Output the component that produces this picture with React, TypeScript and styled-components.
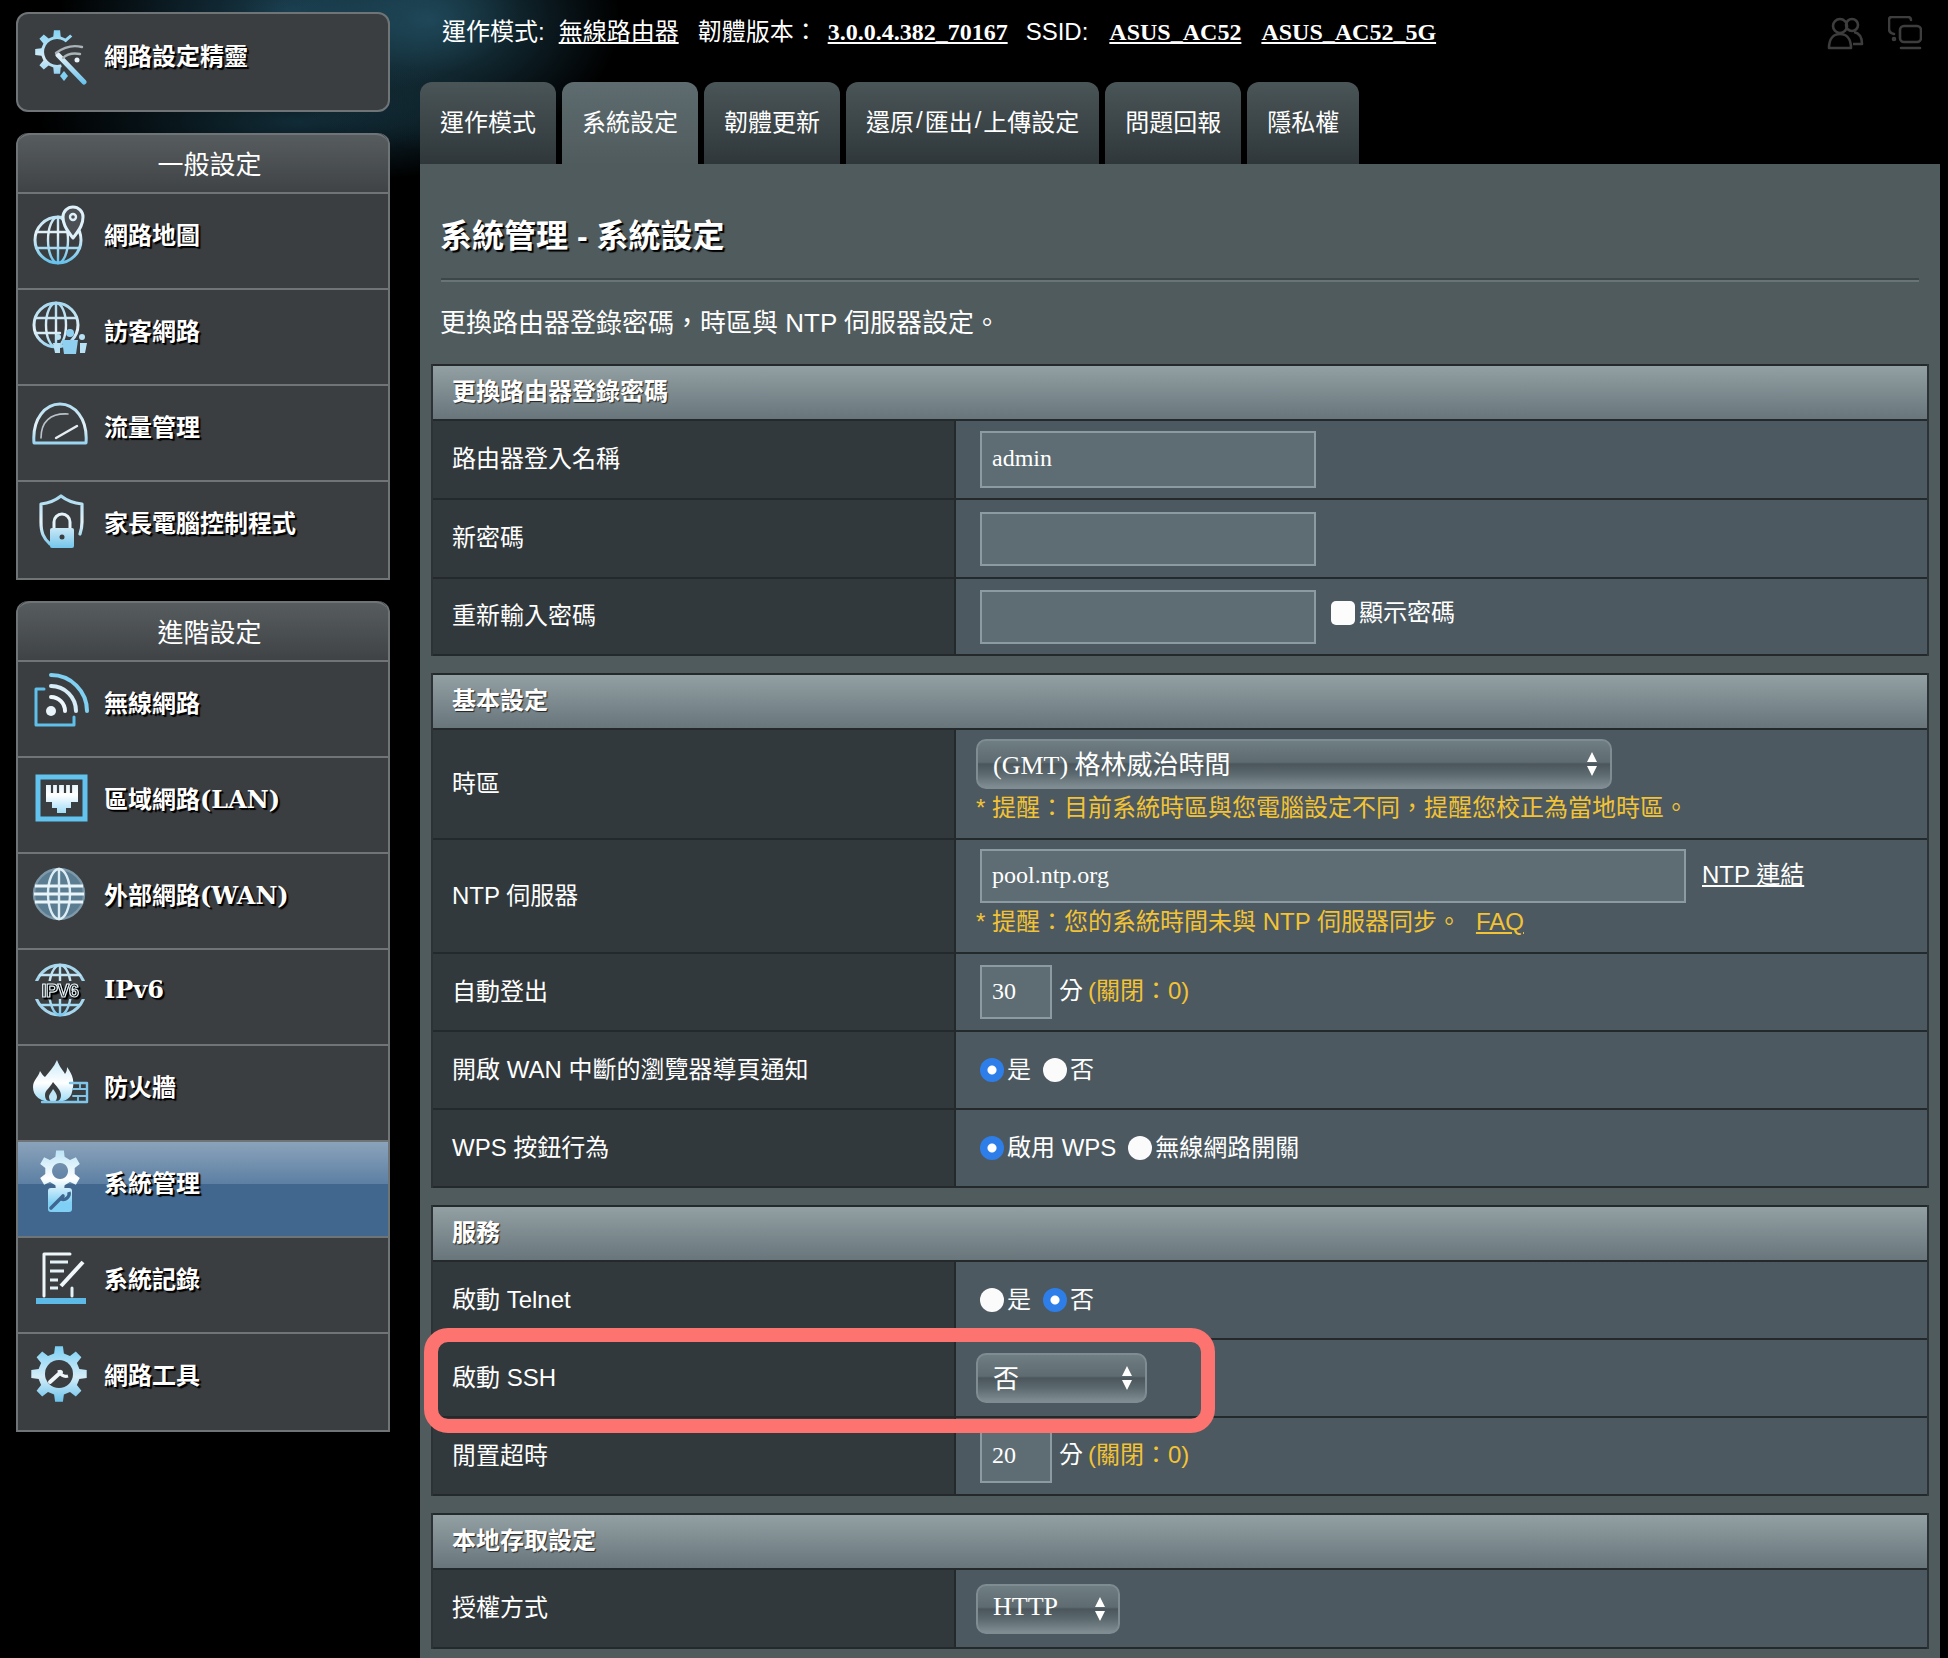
import React from "react";
import styled, { createGlobalStyle } from "styled-components";

const sans = `"Liberation Sans", "Noto Sans CJK TC", sans-serif`;
const serif = `"Liberation Serif", "Noto Sans CJK TC", serif`;

// full-width punctuation used all over the router's copy
const COLON = "\uFF1A";
const COMMA = "\uFF0C";

const GlobalStyle = createGlobalStyle`
  html, body {
    margin: 0;
    padding: 0;
    background: #000;
    overflow: hidden;
  }
  * {
    box-sizing: border-box;
  }
`;

const Page = styled.div`
  width: 1948px;
  height: 1658px;
  display: grid;
  grid-template-columns: 420px 1fr;
  color: #fff;
  font-family: ${sans};
  background:
    radial-gradient(ellipse 190px 130px at 430px 20px, rgba(38, 88, 108, 0.75), transparent 100%),
    radial-gradient(ellipse 230px 90px at 290px 10px, rgba(30, 72, 92, 0.8), transparent 100%),
    radial-gradient(ellipse 260px 60px at 300px 122px, rgba(24, 62, 78, 0.7), transparent 100%),
    #000;
`;

/* ---------- sidebar ---------- */

const Sidebar = styled.aside`
  padding: 12px 30px 0 16px;
  display: flex;
  flex-direction: column;
  gap: 21px;
`;

const NavBox = styled.nav`
  padding-bottom: 2px;
  background: #3b3e41;
  border: 2px solid #6f7477;
  border-top: 0;
  border-radius: 12px 12px 0 0;
  overflow: hidden;
`;

const NavHeading = styled.div`
  height: 59px;
  display: flex;
  align-items: center;
  justify-content: center;
  padding: 0 0 3px 13px;
  font-size: 26px;
  background: linear-gradient(#575c5f, #3f4346);
  border-top: 2px solid #6f7477;
  border-radius: 12px 12px 0 0;
`;

const NavItem = styled.a<{ $active?: boolean }>`
  height: 96px;
  display: flex;
  align-items: center;
  gap: 14px;
  padding: 0 0 15px 12px;
  border-top: 2px solid #6f7477;
  font-family: "DejaVu Serif", "Noto Sans CJK TC", serif;
  font-size: 24px;
  font-weight: 700;
  text-shadow: 2px 2px 1px #000, 1px 1px 0 #000;
  background: ${(p) =>
    p.$active
      ? "linear-gradient(#8ba3bb 0, #5c7fa3 45%, #41678f 45%, #41678f 100%)"
      : "transparent"};
`;

const WizardLink = styled(NavItem)`
  height: 100px;
  background: #3b3e41;
  border: 2px solid #6f7477;
  border-radius: 12px;
`;

const IconSvg = styled.svg`
  width: 60px;
  height: 60px;
  flex: none;
  overflow: visible;
  filter: blur(0.5px);
`;

const PaintDefs = styled.svg`
  display: block;
  width: 0;
  height: 0;
`;

const gearPath = (cx: number, cy: number, outer: number, inner: number, teeth: number) => {
  const pts: string[] = [];
  const step = (Math.PI * 2) / teeth;
  for (let i = 0; i < teeth; i++) {
    const a = i * step - Math.PI / 2;
    [
      [-0.3, inner],
      [-0.18, outer],
      [0.18, outer],
      [0.3, inner],
    ].forEach(([f, r]) => {
      const x = cx + Math.cos(a + f * step) * r;
      const y = cy + Math.sin(a + f * step) * r;
      pts.push(`${x.toFixed(1)} ${y.toFixed(1)}`);
    });
  }
  return `M${pts.join("L")}Z`;
};

const Glyph = ({ children }: { children: React.ReactNode }) => (
  <IconSvg viewBox="0 0 60 60">
    <g fill="none" stroke="url(#sky)" strokeWidth="2.4" strokeLinecap="round" strokeLinejoin="round">
      {children}
    </g>
  </IconSvg>
);

const WizardIcon = () => (
  <Glyph>
    <clipPath id="wizardCut">
      <path d="M0 0H44V10L27 25L34 50L28 60H0Z" />
    </clipPath>
    <path
      clipPath="url(#wizardCut)"
      fillRule="evenodd"
      fill="url(#skyBlue)"
      stroke="none"
      d={`${gearPath(27, 27, 22, 16, 8)}M27 14a13 13 0 1 0 .1 0Z`}
    />
    <path d="M28 30L54 57" stroke="url(#sky)" strokeWidth="5" />
    <path d="M26 28C34 22 44 20 52 22" stroke="#aab4b8" />
    <path d="M33 33C38 28 44 28 50 29" stroke="#aab4b8" />
    <circle cx="47" cy="35" r="2.5" fill="#e8f4fa" stroke="none" />
    <path d="M34 46L38 51L34 56L30 51Z" fill="#7fd0f2" stroke="none" />
  </Glyph>
);

const MapIcon = () => (
  <Glyph>
    <circle cx="28" cy="36" r="23" strokeWidth="3" />
    <ellipse cx="28" cy="36" rx="10" ry="23" />
    <path d="M6 28H50M6 44H50M28 13V59" />
    <path d="M43 34C35 24 33 19 33 13a10 10 0 0 1 20 0C53 19 51 24 43 34Z" fill="#4c5054" stroke="#dff1fa" strokeWidth="3" />
    <circle cx="43" cy="13" r="3" stroke="#dff1fa" />
  </Glyph>
);

const GuestIcon = () => (
  <Glyph>
    <circle cx="26" cy="25" r="22" strokeWidth="3" />
    <ellipse cx="26" cy="25" rx="10" ry="22" />
    <path d="M5 18H47M5 33H30M26 3V46" />
    <circle cx="40" cy="33" r="4" fill="#8fd0f0" stroke="none" />
    <path d="M32 40H48L46 54H34Z" fill="#8fd0f0" stroke="none" />
    <circle cx="28" cy="37" r="3" fill="#b8e2f4" stroke="none" />
    <path d="M23 43H30V53H25Z" fill="#b8e2f4" stroke="none" />
    <circle cx="52" cy="37" r="3" fill="#b8e2f4" stroke="none" />
    <path d="M50 43H57L55 53H50Z" fill="#b8e2f4" stroke="none" />
  </Glyph>
);

const GaugeIcon = () => (
  <Glyph>
    <path d="M4 47C2 22 16 8 30 8S58 22 56 47Z" strokeWidth="3" />
    <path d="M11 42C11 26 20 17 38 18" stroke="#b9c4c9" strokeWidth="1.6" />
    <path d="M26 42L47 30" stroke="#e5eef2" />
  </Glyph>
);

const ShieldIcon = () => (
  <Glyph>
    <path d="M20 52C13 46 11 40 11 30V12C20 11 26 8 31 4C36 8 42 11 52 12V30C52 35 51 39 50 42" strokeWidth="3.2" />
    <path d="M24 36v-6a8 8 0 0 1 16 0v6" stroke="#e4f3fa" strokeWidth="3" />
    <rect x="20" y="36" width="24" height="20" rx="2" fill="url(#sky)" stroke="none" />
    <circle cx="32" cy="45" r="2.5" fill="#3b3e41" stroke="none" />
  </Glyph>
);

const WirelessIcon = () => (
  <Glyph>
    <path d="M14 17H6V53H44V45" stroke="#5fc0ec" strokeWidth="3" />
    <circle cx="21" cy="39" r="5" fill="#e8f4fa" stroke="none" />
    <path d="M21 25A14 14 0 0 1 35 39" stroke="#eef8fc" strokeWidth="4" />
    <path d="M21 14A25 25 0 0 1 46 39" stroke="#d6edf8" strokeWidth="4" />
    <path d="M21 3A36 36 0 0 1 57 39" stroke="#7fd0f2" strokeWidth="4" />
  </Glyph>
);

const LanIcon = () => (
  <Glyph>
    <rect x="8" y="9" width="47" height="42" stroke="#63c3ef" strokeWidth="5" strokeLinejoin="miter" />
    <path
      d="M16 17H48V34H41V40H36V45H27V40H22V34H16Z"
      fill="url(#skyWhite)"
      stroke="none"
    />
    <path d="M22 16V25M28 16V25M35 16V25M41 16V25" stroke="#3b3e41" strokeWidth="2.2" strokeLinecap="butt" />
  </Glyph>
);

const GlobeIcon = () => (
  <Glyph>
    <circle cx="29" cy="30" r="25" fill="#5b7d92" stroke="#7d99aa" />
    <ellipse cx="29" cy="30" rx="11" ry="25" stroke="#dcedf5" />
    <path d="M5 22H53M4 30H54M5 38H53" stroke="#eaf5fa" strokeWidth="3" strokeLinecap="butt" />
    <path d="M29 5V55" stroke="#dcedf5" />
  </Glyph>
);

const Ipv6Label = styled.text`
  font-family: ${sans};
  font-size: 18px;
  font-weight: 700;
  letter-spacing: -0.5px;
  fill: #3b3e41;
  stroke: #e4f1f7;
  stroke-width: 1.2px;
`;

const Ipv6Icon = () => (
  <Glyph>
    <circle cx="30" cy="30" r="25" stroke="#a6d6ee" strokeWidth="3" />
    <ellipse cx="30" cy="30" rx="11" ry="25" />
    <path d="M10 15H50M10 45H50M30 5V22M30 38V55" />
    <rect x="3" y="21" width="54" height="18" fill="#3b3e41" stroke="none" />
    <Ipv6Label x="30" y="37" textAnchor="middle">IPV6</Ipv6Label>
  </Glyph>
);

const FirewallIcon = () => (
  <Glyph>
    <path
      d="M27 4C30 12 33 14 35 18C37 15 37 13 37 11C43 19 45 26 42 36C41 42 36 46 24 46C10 46 3 40 3 31C3 24 8 22 10 15C12 18 13 20 15 21C19 16 24 11 27 4Z"
      fill="url(#skyWhite)"
      stroke="none"
    />
    <path d="M23 26C26 30 31 34 31 39C31 44 28 46 23 46C18 46 15 44 15 39C15 34 20 32 23 26Z" fill="#3b3e41" stroke="none" />
    <path d="M23 33C25 36 27 38 27 41C27 44 25 46 23 46S19 44 19 41C19 38 22 36 23 33Z" fill="#bfe6f6" stroke="none" />
    <path d="M40 27H57V46H12" stroke="#7fc6ea" />
    <path d="M43 33H57M43 40H57M50 27V33M48 40V46" stroke="#7fc6ea" strokeWidth="1.8" />
  </Glyph>
);

const SystemIcon = () => (
  <Glyph>
    <path
      fillRule="evenodd"
      fill="url(#skyWhite)"
      stroke="none"
      d={`${gearPath(30, 19, 21, 15, 6)}M30 11a8 8 0 1 0 .1 0Z`}
    />
    <rect x="18" y="36" width="24" height="24" rx="3" fill="url(#skyWhite)" stroke="none" />
    <path d="M21 56L33 44" stroke="#3f6690" strokeWidth="3.6" />
    <path d="M31 47a6 6 0 0 0 8 -7" stroke="#3f6690" strokeWidth="3.4" strokeLinecap="butt" />
  </Glyph>
);

const LogIcon = () => (
  <Glyph>
    <path d="M14 48V6H40" stroke="#eef6fa" strokeWidth="3" />
    <path d="M42 40V48" stroke="#e4f1f7" strokeWidth="3" />
    <path d="M20 14H38M20 23H34M20 32H28M20 40H28" stroke="#e4f1f7" strokeWidth="3" strokeLinecap="butt" />
    <path d="M31 38L53 14" stroke="#f1f8fb" strokeWidth="4" strokeLinecap="butt" />
    <path d="M6 56V50H56V56Z" fill="#5db9e6" stroke="none" />
  </Glyph>
);

const ToolsIcon = () => (
  <Glyph>
    <path fill="url(#skyBlue)" stroke="none" d={gearPath(29, 30, 28, 21, 8)} />
    <circle cx="29" cy="30" r="14" fill="#3b3e41" stroke="none" />
    <path d="M20 38L31 28" stroke="#eef6fa" strokeWidth="4" />
    <path d="M29 26a7 7 0 0 0 9 6" stroke="#eef6fa" strokeWidth="3.2" strokeLinecap="butt" />
  </Glyph>
);

const generalNav = [
  { label: "網路地圖", icon: <MapIcon /> },
  { label: "訪客網路", icon: <GuestIcon /> },
  { label: "流量管理", icon: <GaugeIcon /> },
  { label: "家長電腦控制程式", icon: <ShieldIcon /> },
];

const advancedNav = [
  { label: "無線網路", icon: <WirelessIcon /> },
  { label: "區域網路(LAN)", icon: <LanIcon /> },
  { label: "外部網路(WAN)", icon: <GlobeIcon /> },
  { label: "IPv6", icon: <Ipv6Icon /> },
  { label: "防火牆", icon: <FirewallIcon /> },
  { label: "系統管理", icon: <SystemIcon />, active: true },
  { label: "系統記錄", icon: <LogIcon /> },
  { label: "網路工具", icon: <ToolsIcon /> },
];

/* ---------- top bar and tabs ---------- */

const Main = styled.main`
  margin-right: 8px;
  display: flex;
  flex-direction: column;
  min-width: 0;
`;

const TopBar = styled.header`
  height: 82px;
  padding: 16px 18px 0 22px;
  display: flex;
  justify-content: space-between;
  align-items: flex-start;
`;

const StatusLine = styled.div`
  display: flex;
  align-items: center;
  font-size: 24px;
  line-height: 32px;
  white-space: nowrap;
`;

const StatusLabel = styled.span<{ $gap: number }>`
  margin-right: ${(p) => p.$gap}px;
`;

const StatusLink = styled.a<{ $gap: number; $plain?: boolean }>`
  margin-right: ${(p) => p.$gap}px;
  font-family: ${serif};
  font-weight: ${(p) => (p.$plain ? 400 : 700)};
  text-decoration: underline;
`;

const StatusIcons = styled.div`
  display: flex;
  gap: 24px;
  color: #3d3d3d;
`;

const Tabs = styled.div`
  height: 82px;
  display: flex;
  gap: 6px;
`;

const Tab = styled.div<{ $active?: boolean }>`
  padding: 0 20px 6px;
  display: flex;
  align-items: center;
  border-radius: 12px 12px 0 0;
  font-size: 24px;
  white-space: nowrap;
  background: ${(p) =>
    p.$active
      ? "linear-gradient(#5e6c6f, #505b5d)"
      : "linear-gradient(#4a5558, #2f373a)"};
`;

const TabSlash = styled.span`
  margin: 0 2px;
`;

/* ---------- panel ---------- */

const Panel = styled.section`
  flex: 1;
  padding: 50px 11px 10px;
  background: #505b5d;
`;

const Title = styled.h1`
  margin: 0 10px 0 9px;
  font-size: 32px;
  line-height: 44px;
  font-weight: 700;
  text-shadow: 2px 2px 1px #000;
`;

const TitleRule = styled.div`
  margin: 20px 10px 0;
  height: 4px;
  border-top: 2px solid #3d4648;
  border-bottom: 2px solid #687578;
`;

const Description = styled.p`
  margin: 23px 10px 23px 9px;
  font-size: 26px;
  line-height: 36px;
`;

const Section = styled.div`
  margin-bottom: 17px;
  border-left: 2px solid #2c3235;
  border-right: 2px solid #2c3235;
`;

const SectionHead = styled.div`
  height: 57px;
  padding: 0 0 6px 19px;
  display: flex;
  align-items: center;
  border-top: 2px solid #24292b;
  border-bottom: 2px solid #24292b;
  font-size: 24px;
  font-weight: 700;
  text-shadow: 1px 1px 1px #222;
  background: linear-gradient(#929fa3, #68767b);
`;

const Row = styled.div<{ $height: number }>`
  position: relative;
  height: ${(p) => p.$height}px;
  display: grid;
  grid-template-columns: 523px 1fr;
  border-bottom: 2px solid #24292b;
`;

const RowLabel = styled.div`
  padding: 0 0 6px 19px;
  display: flex;
  align-items: center;
  font-size: 24px;
  background: #32393c;
  border-right: 2px solid #24292b;
`;

const RowValue = styled.div<{ $stacked?: boolean }>`
  padding: ${(p) => (p.$stacked ? "9px 0 0 21px" : "0 0 0 21px")};
  display: flex;
  flex-direction: ${(p) => (p.$stacked ? "column" : "row")};
  align-items: ${(p) => (p.$stacked ? "flex-start" : "center")};
  font-size: 24px;
  background: #4c5960;
`;

const InputLine = styled.div`
  display: flex;
  align-items: center;
  gap: 16px;
`;

const TextInput = styled.input<{ $width: number; $height: number }>`
  width: ${(p) => p.$width}px;
  height: ${(p) => p.$height}px;
  margin-left: 3px;
  padding: 0 0 2px 10px;
  border: 2px solid #8b9ba1;
  border-radius: 0;
  outline: none;
  background: #5e6d74;
  color: #fff;
  font-family: ${serif};
  font-size: 24px;
`;

const Check = styled.span`
  width: 24px;
  height: 24px;
  margin: 0 4px 8px 15px;
  flex: none;
  border-radius: 5px;
  background: #fcfcfc;
`;

const CheckLabel = styled.span`
  padding-bottom: 12px;
`;

const SelectBox = styled.div<{ $width: number; $height: number }>`
  position: relative;
  width: ${(p) => p.$width}px;
  height: ${(p) => p.$height}px;
  margin-left: -1px;
  padding: 0 0 4px 15px;
  display: flex;
  align-items: center;
  border: 2px solid #7f8c91;
  border-radius: 10px;
  font-family: ${serif};
  font-size: 26px;
  background: linear-gradient(#6f7e83 0, #5e6b70 46%, #4a565b 50%, #5c696e 72%, #7f8d92 100%);
`;

const SelectArrows = styled.svg`
  position: absolute;
  right: 12px;
  top: 50%;
  margin-top: -13px;
  width: 12px;
  height: 26px;
`;

const Hint = styled.div`
  margin-top: 4px;
  margin-left: -1px;
  line-height: 30px;
  color: #f3c335;
  white-space: nowrap;
`;

const LightLink = styled.a`
  padding-bottom: 8px;
  color: #fff;
  text-decoration: underline;
`;

const HintLink = styled.a`
  margin-left: 15px;
  color: #f3c335;
  text-decoration: underline;
`;

const Unit = styled.span`
  margin-left: 7px;
  padding-bottom: 7px;
`;

const Off = styled.span`
  margin-left: 5px;
  padding-bottom: 7px;
  color: #f3c335;
`;

const RadioGroup = styled.div`
  margin-left: 3px;
  display: flex;
  align-items: center;
`;

const RadioDot = styled.span<{ $on?: boolean }>`
  width: 24px;
  height: 24px;
  margin-right: 3px;
  flex: none;
  border-radius: 50%;
  background: ${(p) =>
    p.$on ? "radial-gradient(circle, #fff 0 4px, #2d7ee8 5px)" : "#fbfbfb"};
`;

const RadioText = styled.span`
  margin-right: 12px;
  padding-bottom: 5px;
`;

const Highlight = styled.div`
  position: absolute;
  z-index: 1;
  left: -9px;
  top: -12px;
  width: 791px;
  height: 105px;
  border: 14px solid #fc7370;
  border-radius: 24px;
  pointer-events: none;
`;

const Select = ({ value, width, height }: { value: string; width: number; height: number }) => (
  <SelectBox $width={width} $height={height}>
    {value}
    <SelectArrows viewBox="0 0 12 26">
      <path d="M6 1L11 11H1Z M1 15H11L6 25Z" fill="#fff" />
    </SelectArrows>
  </SelectBox>
);

const Radios = ({ options, selected }: { options: string[]; selected: number }) => (
  <RadioGroup>
    {options.map((o, i) => (
      <React.Fragment key={o}>
        <RadioDot $on={i === selected} />
        <RadioText>{o}</RadioText>
      </React.Fragment>
    ))}
  </RadioGroup>
);

const App = () => {
  return (
    <>
      <GlobalStyle />
      <PaintDefs aria-hidden="true">
        <defs>
          <linearGradient id="sky" gradientUnits="userSpaceOnUse" x1="0" y1="0" x2="0" y2="60">
            <stop offset="0" stopColor="#9fd6f0" />
            <stop offset="0.5" stopColor="#e4f2f8" />
            <stop offset="1" stopColor="#62bfeb" />
          </linearGradient>
          <linearGradient id="skyBlue" gradientUnits="userSpaceOnUse" x1="0" y1="0" x2="0" y2="60">
            <stop offset="0" stopColor="#74cdf3" />
            <stop offset="0.55" stopColor="#d5edf8" />
            <stop offset="1" stopColor="#62bfeb" />
          </linearGradient>
          <linearGradient id="skyWhite" gradientUnits="userSpaceOnUse" x1="0" y1="0" x2="0" y2="60">
            <stop offset="0" stopColor="#bfe6f7" />
            <stop offset="0.45" stopColor="#ffffff" />
            <stop offset="0.85" stopColor="#7fd0f4" />
          </linearGradient>
        </defs>
      </PaintDefs>

      <Page>
        <Sidebar>
          <WizardLink>
            <WizardIcon />
            網路設定精靈
          </WizardLink>
          <NavBox>
            <NavHeading>一般設定</NavHeading>
            {generalNav.map((n) => (
              <NavItem key={n.label}>
                {n.icon}
                {n.label}
              </NavItem>
            ))}
          </NavBox>
          <NavBox>
            <NavHeading>進階設定</NavHeading>
            {advancedNav.map((n) => (
              <NavItem key={n.label} $active={n.active}>
                {n.icon}
                {n.label}
              </NavItem>
            ))}
          </NavBox>
        </Sidebar>

        <Main>
          <TopBar>
            <StatusLine>
              <StatusLabel $gap={14}>運作模式:</StatusLabel>
              <StatusLink $gap={19} $plain>無線路由器</StatusLink>
              <StatusLabel $gap={10}>韌體版本{COLON}</StatusLabel>
              <StatusLink $gap={18}>3.0.0.4.382_70167</StatusLink>
              <StatusLabel $gap={21}>SSID:</StatusLabel>
              <StatusLink $gap={20}>ASUS_AC52</StatusLink>
              <StatusLink $gap={0}>ASUS_AC52_5G</StatusLink>
            </StatusLine>
            <StatusIcons>
              <svg width="37" height="34" viewBox="0 0 37 34" fill="none" stroke="currentColor" strokeWidth="2.6" strokeLinejoin="round">
                <circle cx="13" cy="10" r="7" />
                <circle cx="25" cy="9" r="6" />
                <path d="M2 32C2 22 7 18 13 18S24 22 24 32Z" />
                <path d="M27 16C32 17 35 21 35 28H26" />
              </svg>
              <svg width="34" height="34" viewBox="0 0 34 34" fill="none" stroke="currentColor" strokeWidth="2.6" strokeLinecap="round">
                <path d="M6 18C2 17 1 15 1 13V4C1 2 2 1 4 1H20C22 1 23 2 23 4" />
                <rect x="12" y="10" width="21" height="16" rx="4" />
                <path d="M13 32H32" />
                <circle cx="6" cy="23" r="1" />
              </svg>
            </StatusIcons>
          </TopBar>

          <Tabs>
            <Tab>運作模式</Tab>
            <Tab $active>系統設定</Tab>
            <Tab>韌體更新</Tab>
            <Tab>
              還原<TabSlash>/</TabSlash>匯出<TabSlash>/</TabSlash>上傳設定
            </Tab>
            <Tab>問題回報</Tab>
            <Tab>隱私權</Tab>
          </Tabs>

          <Panel>
            <Title>系統管理 - 系統設定</Title>
            <TitleRule />
            <Description>更換路由器登錄密碼{COMMA}時區與 NTP 伺服器設定。</Description>

            <Section>
              <SectionHead>更換路由器登錄密碼</SectionHead>
              <Row $height={79}>
                <RowLabel>路由器登入名稱</RowLabel>
                <RowValue>
                  <TextInput $width={336} $height={57} defaultValue="admin" />
                </RowValue>
              </Row>
              <Row $height={79}>
                <RowLabel>新密碼</RowLabel>
                <RowValue>
                  <TextInput $width={336} $height={54} />
                </RowValue>
              </Row>
              <Row $height={77}>
                <RowLabel>重新輸入密碼</RowLabel>
                <RowValue>
                  <TextInput $width={336} $height={54} />
                  <Check />
                  <CheckLabel>顯示密碼</CheckLabel>
                </RowValue>
              </Row>
            </Section>

            <Section>
              <SectionHead>基本設定</SectionHead>
              <Row $height={110}>
                <RowLabel>時區</RowLabel>
                <RowValue $stacked>
                  <Select value="(GMT) 格林威治時間" width={636} height={50} />
                  <Hint>* 提醒{COLON}目前系統時區與您電腦設定不同{COMMA}提醒您校正為當地時區。</Hint>
                </RowValue>
              </Row>
              <Row $height={114}>
                <RowLabel>NTP 伺服器</RowLabel>
                <RowValue $stacked>
                  <InputLine>
                    <TextInput $width={706} $height={54} defaultValue="pool.ntp.org" />
                    <LightLink>NTP 連結</LightLink>
                  </InputLine>
                  <Hint>
                    * 提醒{COLON}您的系統時間未與 NTP 伺服器同步。
                    <HintLink>FAQ</HintLink>
                  </Hint>
                </RowValue>
              </Row>
              <Row $height={78}>
                <RowLabel>自動登出</RowLabel>
                <RowValue>
                  <TextInput $width={72} $height={54} defaultValue="30" />
                  <Unit>分</Unit>
                  <Off>(關閉{COLON}0)</Off>
                </RowValue>
              </Row>
              <Row $height={78}>
                <RowLabel>開啟 WAN 中斷的瀏覽器導頁通知</RowLabel>
                <RowValue>
                  <Radios options={["是", "否"]} selected={0} />
                </RowValue>
              </Row>
              <Row $height={78}>
                <RowLabel>WPS 按鈕行為</RowLabel>
                <RowValue>
                  <Radios options={["啟用 WPS", "無線網路開關"]} selected={0} />
                </RowValue>
              </Row>
            </Section>

            <Section>
              <SectionHead>服務</SectionHead>
              <Row $height={78}>
                <RowLabel>啟動 Telnet</RowLabel>
                <RowValue>
                  <Radios options={["是", "否"]} selected={1} />
                </RowValue>
              </Row>
              <Row $height={78}>
                <RowLabel>啟動 SSH</RowLabel>
                <RowValue>
                  <Select value="否" width={171} height={50} />
                </RowValue>
                <Highlight />
              </Row>
              <Row $height={78}>
                <RowLabel>閒置超時</RowLabel>
                <RowValue>
                  <TextInput $width={72} $height={54} defaultValue="20" />
                  <Unit>分</Unit>
                  <Off>(關閉{COLON}0)</Off>
                </RowValue>
              </Row>
            </Section>

            <Section>
              <SectionHead>本地存取設定</SectionHead>
              <Row $height={79}>
                <RowLabel>授權方式</RowLabel>
                <RowValue>
                  <Select value="HTTP" width={144} height={50} />
                </RowValue>
              </Row>
            </Section>
          </Panel>
        </Main>
      </Page>
    </>
  );
};

export default App;
